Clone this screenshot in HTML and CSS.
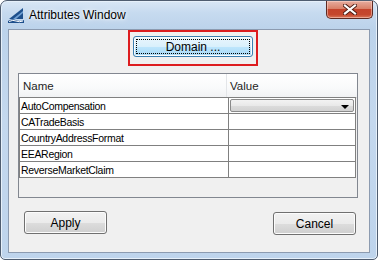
FILE: index.html
```html
<!DOCTYPE html>
<html lang="en">
<head>
    <meta charset="UTF-8">
    <title>Attributes Window</title>
    <link rel="stylesheet" href="styles.css">
</head>
<body>
    <div class="window">
        <div class="titlebar">
            <svg class="app-icon" width="16" height="16" viewBox="0 0 16 16">
                <polygon points="1,12 15,1 15,12" fill="#1d4f8c"/>
                <polygon points="5,12 15,4 15,6 8,12" fill="#6f9fd3"/>
                <path d="M0,14 Q4,11 8,13 T16,13 L16,16 L0,16 Z" fill="#1d4f8c"/>
                <path d="M1,14.5 Q5,12.5 8,14 T15,14" stroke="#ffffff" stroke-width="1" fill="none"/>
            </svg>
            <span class="title">Attributes Window</span>
            <div class="close-btn">
                <svg width="14" height="11" viewBox="0 0 14 11">
                    <path d="M2,1.5 L12,9.5 M12,1.5 L2,9.5" stroke="#4a1a12" stroke-width="4" stroke-linecap="square"/>
                    <path d="M2,1.5 L12,9.5 M12,1.5 L2,9.5" stroke="#ffffff" stroke-width="2.2" stroke-linecap="square"/>
                </svg>
            </div>
        </div>

        <div class="client">
            <div class="domain-row">
                <div class="highlight">
                    <button class="btn btn-focus"><span class="focus-rect">Domain ...</span></button>
                </div>
            </div>

            <div class="grid">
                <div class="grid-header">
                    <div class="col-name">Name</div>
                    <div class="col-value">Value</div>
                </div>
                <div class="grid-row">
                    <div class="cell-name">AutoCompensation</div>
                    <div class="cell-value">
                        <div class="combo"><span class="combo-arrow"></span></div>
                    </div>
                </div>
                <div class="grid-row">
                    <div class="cell-name">CATradeBasis</div>
                    <div class="cell-value"></div>
                </div>
                <div class="grid-row">
                    <div class="cell-name">CountryAddressFormat</div>
                    <div class="cell-value"></div>
                </div>
                <div class="grid-row">
                    <div class="cell-name">EEARegion</div>
                    <div class="cell-value"></div>
                </div>
                <div class="grid-row">
                    <div class="cell-name">ReverseMarketClaim</div>
                    <div class="cell-value"></div>
                </div>
            </div>

            <div class="footer">
                <button class="btn">Apply</button>
                <button class="btn btn-cancel">Cancel</button>
            </div>
        </div>
    </div>
</body>
</html>
```

FILE: styles.css
```css
/* Ventana estilo Windows 7 */
body {
    margin: 0;
    font-family: "Liberation Sans", Arial, sans-serif;
    background: #ffffff;
}

.window {
    width: 378px;
    height: 260px;
    box-sizing: border-box;
    border: 1px solid #4f5d70;
    border-radius: 7px 7px 5px 5px;
    background: linear-gradient(to bottom, #d9e7f5 0px, #c6daef 12px, #bcd3eb 28px, #c4d8ee 120px, #bed4ec 260px);
    box-shadow: inset 0 0 0 1px #e6f0fa;
    padding: 0 7px 6px 7px;
    display: flex;
    flex-direction: column;
}

.titlebar {
    height: 28px;
    display: flex;
    align-items: flex-start;
}

.app-icon {
    margin-top: 6px;
    margin-left: 0;
}

.title {
    margin-top: 7px;
    margin-left: 5px;
    font-size: 12px;
    color: #000000;
    text-shadow: 0 0 6px #ffffff, 0 0 3px #ffffff;
}

/* Boton cerrar rojo */
.close-btn {
    margin-left: auto;
    margin-right: -3px;
    width: 45px;
    height: 17px;
    border: 1px solid #5e2a22;
    border-top: none;
    border-radius: 0 0 5px 5px;
    background: linear-gradient(to bottom, #e7ad9f 0%, #d98068 45%, #c4432b 50%, #c5472d 80%, #d9775b 100%);
    box-shadow: inset 0 0 0 1px rgba(255, 220, 210, 0.5);
    display: flex;
    justify-content: center;
    align-items: center;
}

.client {
    flex: 1;
    background: #f0f0f0;
    border: 1px solid #8c9bb0;
    display: flex;
    flex-direction: column;
}

.domain-row {
    display: flex;
    padding-left: 119px;
}

.highlight {
    width: 130px;
    height: 36px;
    box-sizing: border-box;
    border: 2px solid #dd1c1f;
    padding: 4px 3px 0 3px;
}

/* Botones */
.btn {
    font-family: "Liberation Sans", Arial, sans-serif;
    font-size: 12px;
    color: #000000;
    width: 83px;
    height: 23px;
    box-sizing: border-box;
    border: 1px solid #707070;
    border-radius: 3px;
    background: linear-gradient(to bottom, #f2f2f2 0%, #ebebeb 50%, #dddddd 51%, #cfcfcf 100%);
    box-shadow: inset 0 0 0 1px #fcfcfc;
    padding: 0;
}

.btn-focus {
    width: 120px;
    height: 21px;
    border-color: #3c7fb1;
    background: linear-gradient(to bottom, #eaf6fd 0%, #d9f0fc 50%, #bee6fd 51%, #a7d9f5 100%);
    padding: 2px;
    display: flex;
}

.focus-rect {
    flex: 1;
    border: 1px dotted #000000;
    display: flex;
    justify-content: center;
    align-items: center;
}

/* Tabla de atributos */
.grid {
    margin: 7px 11px 0 9px;
    height: 125px;
    box-sizing: border-box;
    border: 1px solid #828790;
    background: #f0f0f0;
}

.grid-header {
    display: flex;
    height: 23px;
    background: linear-gradient(to bottom, #ffffff 0%, #f9fafb 60%, #f1f2f4 100%);
    border-bottom: 1px solid #d5d5d5;
    font-size: 11.5px;
    color: #1e1e1e;
}

.col-name {
    width: 203px;
    padding-left: 4px;
    border-right: 1px solid #e3e5e8;
    display: flex;
    align-items: center;
}

.col-value {
    padding-left: 3px;
    display: flex;
    align-items: center;
}

.grid-row {
    display: flex;
    height: 15px;
    margin-right: 1px;
    background: #ffffff;
    border-bottom: 1px solid #808080;
    font-size: 10.5px;
    letter-spacing: -0.3px;
}

.grid-header + .grid-row {
    height: 15px;
    margin-top: -1px;
    border-top: 1px solid #808080;
}

.cell-name {
    width: 207px;
    border-left: 1px solid #808080;
    padding-left: 1px;
    display: flex;
    align-items: center;
}

.cell-value {
    flex: 1;
    border-left: 1px solid #808080;
    border-right: 1px solid #808080;
    padding: 1px 0 0 1px;
}

.combo {
    height: 13px;
    margin-right: 1px;
    box-sizing: border-box;
    border: 1px solid #8a8a8a;
    border-radius: 2px;
    background: linear-gradient(to bottom, #f3f3f3 0%, #e9e9e9 50%, #dcdcdc 51%, #d2d2d2 100%);
    display: flex;
    justify-content: flex-end;
    align-items: flex-end;
    padding: 0 4px 2px 0;
}

.combo-arrow {
    width: 0;
    height: 0;
    border-left: 4px solid transparent;
    border-right: 4px solid transparent;
    border-top: 4px solid #000000;
}

.footer {
    display: flex;
    justify-content: space-between;
    align-items: flex-start;
    padding: 13px 13px 0 15px;
}

.btn-cancel {
    margin-top: 1px;
}
```
